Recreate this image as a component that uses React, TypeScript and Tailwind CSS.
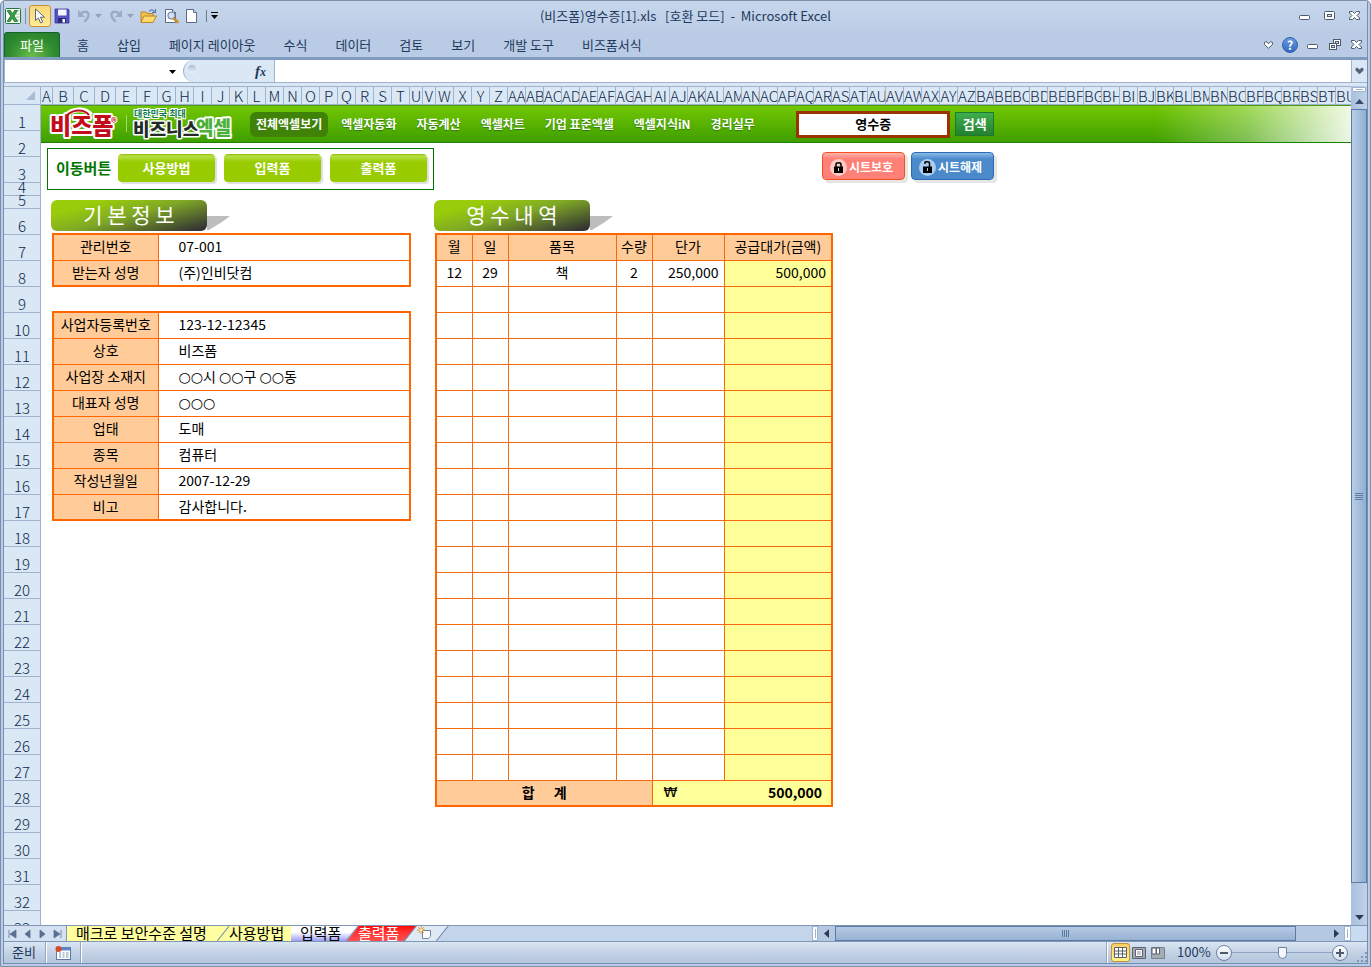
import type { ReactNode } from "react";
import clsx from "clsx";

const COLUMNS: string[] = Array.from({ length: 73 }, (_, i) =>
  i < 26
    ? String.fromCharCode(65 + i)
    : String.fromCharCode(64 + Math.floor(i / 26)) +
      String.fromCharCode(65 + (i % 26)),
);

const ROWS = Array.from({ length: 33 }, (_, i) => i + 1);

const RIBBON_TABS = [
  "홈",
  "삽입",
  "페이지 레이아웃",
  "수식",
  "데이터",
  "검토",
  "보기",
  "개발 도구",
  "비즈폼서식",
];

const BANNER_LINKS = [
  "엑셀자동화",
  "자동계산",
  "엑셀차트",
  "기업 표준엑셀",
  "엑셀지식iN",
  "경리실무",
];

const BASIC_INFO: [string, string][] = [
  ["관리번호", "07-001"],
  ["받는자 성명", "(주)인비닷컴"],
];

const COMPANY_INFO: [string, string][] = [
  ["사업자등록번호", "123-12-12345"],
  ["상호", "비즈폼"],
  ["사업장 소재지", "○○시 ○○구 ○○동"],
  ["대표자 성명", "○○○"],
  ["업태", "도매"],
  ["종목", "컴퓨터"],
  ["작성년월일", "2007-12-29"],
  ["비고", "감사합니다."],
];

const ITEM_ROWS: string[][] = [
  ["12", "29", "책", "2", "250,000", "500,000"],
  ...Array.from({ length: 19 }, () => ["", "", "", "", "", ""]),
];

function colWidth(i: number) {
  if (i === 0) return "w-3";
  if (i < 6) return "w-[21px]";
  if (i === 20 || i === 21) return "w-[13px]";
  return "w-[18px]";
}

/* ── Small drawings ─────────────────────────────────────────── */

function Caret({ className, large }: { className?: string; large?: boolean }) {
  return (
    <svg
      width={large ? 9 : 7}
      height={large ? 5 : 4}
      viewBox="0 0 7 4"
      className={clsx("shrink-0", className)}
      fill="currentColor"
    >
      <path d="M0 0h7L3.5 4z" />
    </svg>
  );
}

function ExcelIcon() {
  return (
    <svg width="16" height="16" viewBox="0 0 16 16">
      <rect x=".5" y=".5" width="15" height="15" rx="1" fill="#fff" stroke="#1f7a34" />
      <path d="M10.500 3h4M11 6h3.500M11 9h3.500M10.500 12h4" stroke="#8fc59a" />
      <path d="M2 2.500h3.500l2 3.300 2-3.300h3L9.200 8l3.500 5.500H9.300L7.300 10l-2.100 3.500H2L5.600 8z" fill="#35a043" stroke="#146b26" strokeWidth=".7" />
    </svg>
  );
}

function PointerIcon() {
  return (
    <svg width="12" height="16" viewBox="0 0 12 16">
      <path d="M1.500 1v11.500l2.900-2.600 2.100 5 2.100-.9-2.100-4.800h4z" fill="#fff" stroke="#55637c" />
    </svg>
  );
}

function SaveIcon() {
  return (
    <svg width="16" height="16" viewBox="0 0 16 16">
      <path d="M1 1h13l1 1v13H1z" fill="#5551c4" stroke="#39359a" strokeWidth=".8" />
      <path d="M4 1.500h8.500v6H4z" fill="#f4f6ff" />
      <path d="M4 10h8v5H4z" fill="#2b2875" />
      <path d="M8.500 11h2.500v3.500H8.500z" fill="#fff" />
    </svg>
  );
}

function UndoIcon({ flip }: { flip?: boolean }) {
  return (
    <svg width="16" height="16" viewBox="0 0 16 16" className={clsx(flip && "-scale-x-100")}>
      <path d="M4 6.500C7 2.500 13 3 12.500 7.500 12.200 10.500 9.500 12 8.500 14" fill="none" stroke="#9aabc4" strokeWidth="2.400" />
      <path d="M2 2v7h7z" fill="#9aabc4" />
    </svg>
  );
}

function FolderIcon() {
  return (
    <svg width="17" height="16" viewBox="0 0 17 16">
      <path d="M1 14V4h5l1.500 1.500H13V8" fill="#f3c04b" stroke="#b8862a" />
      <path d="M1 14.500 4 8h12.500L13 14.500z" fill="#ffd86e" stroke="#b8862a" />
      <path d="M9 3.500c2-2.500 4-2 5.500.5M15.500 1v3.500H12" fill="none" stroke="#587cae" strokeWidth="1.200" />
    </svg>
  );
}

function PageIcon({ lens }: { lens?: boolean }) {
  return (
    <svg width="16" height="16" viewBox="0 0 16 16">
      <path d="M2.500 1.500h7l3 3v10h-10z" fill="#fff" stroke="#5a6b86" />
      <path d="M9.500 1.500v3h3" fill="#dfe7f3" stroke="#5a6b86" />
      {lens && (
        <>
          <circle cx="8.500" cy="7.500" r="3.500" fill="#cfe2f5" stroke="#6e86a8" strokeWidth="1.200" />
          <path d="m11 10.500 3.500 3.500" stroke="#c98a2b" strokeWidth="2.600" strokeLinecap="round" />
        </>
      )}
    </svg>
  );
}

function MinimizeIcon() {
  return (
    <svg width="12" height="12" viewBox="0 0 12 12">
      <rect x=".5" y="5.500" width="10" height="4" rx="1" fill="#fff" stroke="#4c5a6e" />
    </svg>
  );
}

function MaximizeIcon() {
  return (
    <svg width="12" height="12" viewBox="0 0 12 12">
      <rect x=".5" y="1.500" width="10" height="8" rx="1" fill="#fff" stroke="#4c5a6e" />
      <rect x="3.500" y="4.500" width="4" height="2" fill="#dbe5f1" stroke="#4c5a6e" />
    </svg>
  );
}

function RestoreIcon() {
  return (
    <svg width="12" height="12" viewBox="0 0 12 12">
      <rect x="4.500" y=".5" width="7" height="6" fill="#fff" stroke="#4c5a6e" />
      <rect x="6.500" y="2.500" width="3" height="2" fill="#dbe5f1" stroke="#4c5a6e" />
      <rect x=".5" y="4.500" width="7" height="6" fill="#fff" stroke="#4c5a6e" />
      <rect x="2.500" y="6.500" width="3" height="2" fill="#dbe5f1" stroke="#4c5a6e" />
    </svg>
  );
}

function CloseIcon() {
  return (
    <svg width="12" height="12" viewBox="0 0 12 12">
      <path d="M.5 1.500h3l2 2 2-2h3v1.500L8 5.500l2.500 2.500v1.500h-3l-2-2-2 2h-3V8L3 5.500.5 3z" fill="#fff" stroke="#4c5a6e" />
    </svg>
  );
}

function ChevronIcon({ solid }: { solid?: boolean }) {
  return (
    <svg width="9" height="8" viewBox="0 0 9 8">
      <path
        d="M.5 1.500 2 .5l2.500 2L7 .5l1.500 1v2L4.500 7.300.5 3.500z"
        fill={solid ? "#56657b" : "#fff"}
        stroke="#4c5a6e"
        strokeWidth={solid ? 0 : 1}
      />
    </svg>
  );
}

function LockIcon({ open }: { open?: boolean }) {
  return (
    <svg width="17" height="17" viewBox="0 0 17 17">
      <circle cx="8.500" cy="8.500" r="8.500" fill={open ? "#a9cdee" : "#ffc9c4"} />
      <path d="M4 7.500h9v6.500H4z" />
      <path
        d={open ? "M6 5V3.500C6 2.300 10.500 2.300 10.500 4V8" : "M6 8V5.500C6 3.300 11 3.300 11 5.500V8"}
        fill="none"
        stroke="#000"
        strokeWidth="1.500"
      />
      <path d="M8.500 9v3" stroke={open ? "#a9cdee" : "#ffc9c4"} />
    </svg>
  );
}

function Logo() {
  return (
    <svg width="186" height="34" viewBox="0 0 186 34" className="shrink-0" fontFamily="Noto Sans CJK KR, sans-serif" fontWeight="900">
      <path d="M16 9C24 1 36 1 42 8" fill="none" stroke="#fff" strokeWidth="5" />
      <text x="1" y="27" fontSize="23" fill="#c40d1c" stroke="#fff" strokeWidth="4" strokeLinejoin="round" paintOrder="stroke">비즈폼</text>
      <path d="M18 8C25 2 35 2 40 8" fill="none" stroke="#c40d1c" strokeWidth="2" />
      <text x="62" y="20" fontSize="11" fontWeight="700" fill="#c40d1c" stroke="#fff" strokeWidth="2" paintOrder="stroke">®</text>
      <path d="M77.500 8v17" stroke="#9fdc62" />
      <text x="84" y="29" fontSize="18" fill="#222b26" stroke="#fff" strokeWidth="3" strokeLinejoin="round" paintOrder="stroke">비즈니스</text>
      <text x="147" y="28" fontSize="19" fill="#4cb03a" stroke="#fff" strokeWidth="4" strokeLinejoin="round" paintOrder="stroke">엑셀</text>
      <text x="85" y="10" fontSize="9" fontWeight="700" fill="#0c7a50" stroke="#fff" strokeWidth="2" paintOrder="stroke">대한민국 최대</text>
    </svg>
  );
}

/* ── Sheet pieces ───────────────────────────────────────────── */

function SectionBadge({ children }: { children: ReactNode }) {
  return (
    <div className="flex items-end">
      <h2 className="flex h-[31px] w-[156px] items-center justify-center rounded-md bg-[linear-gradient(165deg,#99cc0a_20%,#7fa826_50%,#333_95%)] pb-0.5 text-[21px] text-white">
        {children}
      </h2>
      <svg width="24" height="16" viewBox="0 0 24 16">
        <path d="M0 1h23L15 7 2 15H0z" fill="#bdbdbd" />
      </svg>
    </div>
  );
}

function MoveButton({ children }: { children: ReactNode }) {
  return (
    <button className="h-7 w-[97px] rounded-[4px] bg-[linear-gradient(#8cbd00,#b9e04a_2px,#a3d31a_6px,#99cc00_8px)] text-[13px] font-bold text-white shadow-[2px_2px_1px_#dedede]">
      {children}
    </button>
  );
}

// placeholder circles are narrower than a Hangul cell, so they get their own face
function CellValue({ text }: { text: string }) {
  return text.split(/(○+)/).map((part, i) =>
    part.startsWith("○") ? (
      <span key={i} className="font-['DejaVu_Sans',sans-serif] leading-3">
        {part}
      </span>
    ) : (
      part
    ),
  );
}

function InfoTable({ rows }: { rows: [string, string][] }) {
  return (
    <table className="ml-px w-[359px] table-fixed border-collapse border-2 border-[#ff6600] text-[14px] leading-5">
      <colgroup>
        <col className="w-[105px]" />
        <col />
      </colgroup>
      <tbody>
        {rows.map(([label, value]) => (
          <tr key={label} className="h-[26px]">
            <th scope="row" className="border border-[#ff6600] bg-[#ffcc99] p-0 pb-0.5 font-normal">
              {label}
            </th>
            <td className="border border-[#ff6600] py-0 pr-0 pb-0.5 pl-5">
              <CellValue text={value} />
            </td>
          </tr>
        ))}
      </tbody>
    </table>
  );
}

const CELL = "border border-[#f56a10] p-0 pb-0.5";

function ItemTable() {
  return (
    <table className="ml-px w-[398px] table-fixed border-collapse border-2 border-[#ff6600] text-center text-[14px] leading-5">
      <colgroup>
        <col className="w-9" />
        <col className="w-9" />
        <col className="w-[108px]" />
        <col className="w-9" />
        <col className="w-[72px]" />
        <col />
      </colgroup>
      <thead>
        <tr className="h-[26px] bg-[#ffcc99]">
          {["월", "일", "품목", "수량", "단가", "공급대가(금액)"].map((h) => (
            <th key={h} scope="col" className={clsx(CELL, "font-normal whitespace-nowrap")}>
              {h}
            </th>
          ))}
        </tr>
      </thead>
      <tbody>
        {ITEM_ROWS.map((row, r) => (
          <tr key={r} className="h-[26px]">
            {row.map((value, c) => (
              <td
                key={c}
                className={clsx(
                  CELL,
                  c > 3 && "pr-[5px] text-right",
                  c === 5 && "bg-[#ffff99]",
                )}
              >
                {value}
              </td>
            ))}
          </tr>
        ))}
      </tbody>
      <tfoot>
        <tr className="h-[26px] font-bold">
          <th scope="row" colSpan={4} className={clsx(CELL, "bg-[#ffcc99] whitespace-pre")}>
            {"합      계"}
          </th>
          <td colSpan={2} className={clsx(CELL, "bg-[#ffff99]")}>
            <div className="flex justify-between pr-[9px] pl-[11px]">
              <span className="font-['DejaVu_Sans',sans-serif] font-normal">₩</span>
              <span>500,000</span>
            </div>
          </td>
        </tr>
      </tfoot>
    </table>
  );
}

function SheetTab({
  children,
  className,
  slantLeft,
  slantRight,
}: {
  children: ReactNode;
  className: string;
  slantLeft?: boolean;
  slantRight?: boolean;
}) {
  return (
    <button
      className={clsx(
        "relative flex h-[15px] shrink-0 items-center overflow-hidden pb-0.5 text-[15px] leading-[15px] whitespace-nowrap",
        slantLeft && slantRight && "[clip-path:polygon(12px_0,100%_0,calc(100%-12px)_100%,0_100%)]",
        slantLeft && !slantRight && "[clip-path:polygon(12px_0,100%_0,100%_100%,0_100%)]",
        !slantLeft && slantRight && "[clip-path:polygon(0_0,100%_0,calc(100%-12px)_100%,0_100%)]",
        className,
      )}
    >
      {children}
      {slantRight && (
        <svg width="13" height="15" viewBox="0 0 13 15" className="absolute top-0 right-0">
          <path d="M12.500 0 .5 15" stroke="#6f8bb0" strokeWidth="1.500" />
        </svg>
      )}
    </button>
  );
}

/* ── Window ─────────────────────────────────────────────────── */

function TitleBar() {
  return (
    <div className="relative flex h-[31px] shrink-0 items-center bg-linear-to-b from-[#c6d6ec] to-[#bccde6] pb-0.5 pl-[1px] text-[#1e395b]">
      <ExcelIcon />
      <span className="ml-1 h-4 w-px bg-[#7f8fa6]" />
      <button aria-label="선택" className="ml-[3px] flex size-[22px] items-center justify-center rounded-[3px] border border-[#c2933b] bg-linear-to-b from-[#fbd77c] to-[#ffec91]">
        <PointerIcon />
      </button>
      <button aria-label="저장" className="ml-[3px]"><SaveIcon /></button>
      <button aria-label="실행 취소" className="ml-[6px]"><UndoIcon /></button>
      <Caret className="ml-[3px] text-[#8fa1bb]" />
      <button aria-label="다시 실행" className="ml-[6px]"><UndoIcon flip /></button>
      <Caret className="ml-[3px] text-[#8fa1bb]" />
      <button aria-label="열기" className="ml-[6px]"><FolderIcon /></button>
      <button aria-label="인쇄 미리 보기" className="ml-[6px]"><PageIcon lens /></button>
      <button aria-label="새로 만들기" className="ml-[5px]"><PageIcon /></button>
      <span className="ml-[6px] h-3 w-px bg-[#6b7c95]" />
      <button aria-label="도구 모음 사용자 지정" className="ml-1 flex flex-col items-center gap-0.5 text-black">
        <span className="h-px w-[7px] bg-black" />
        <Caret />
      </button>
      <div className="pointer-events-none absolute inset-0 flex items-center justify-center pb-0.5 text-[13px] whitespace-pre">
        {"(비즈폼)영수증[1].xls   [호환 모드]  -  Microsoft Excel"}
      </div>
      <div className="ml-auto flex gap-[13px] pr-[6px]">
        <button aria-label="최소화"><MinimizeIcon /></button>
        <button aria-label="최대화"><MaximizeIcon /></button>
        <button aria-label="닫기"><CloseIcon /></button>
      </div>
    </div>
  );
}

function Ribbon() {
  return (
    <div className="flex h-7 shrink-0 items-center border-b-[3px] border-[#7f9cc0] bg-[#bacce5] text-[13px] text-[#1e395b]">
      <button className="h-[25px] w-14 rounded-t-[3px] border border-b-0 border-[#13652a] bg-[radial-gradient(ellipse_at_bottom,#6cc04a,#2f8c2f_60%,#237a2c)] text-white">
        파일
      </button>
      <nav className="ml-[17px] flex gap-7">
        {RIBBON_TABS.map((t) => (
          <button key={t} className="whitespace-nowrap">{t}</button>
        ))}
      </nav>
      <div className="ml-auto flex items-center pr-1">
        <button aria-label="리본 최소화"><ChevronIcon /></button>
        <button aria-label="도움말" className="ml-[9px] flex size-4 items-center justify-center rounded-full border border-[#2c5fae] bg-linear-to-b from-[#6d9be0] to-[#3469bd] text-[12px] leading-3 font-bold text-white">
          ?
        </button>
        <button aria-label="통합 문서 최소화" className="ml-[9px]"><MinimizeIcon /></button>
        <button aria-label="통합 문서 복원" className="ml-[10px]"><RestoreIcon /></button>
        <button aria-label="통합 문서 닫기" className="ml-[10px]"><CloseIcon /></button>
      </div>
    </div>
  );
}

function FormulaBar() {
  return (
    <>
      <div className="flex h-[23px] shrink-0 border-b border-[#9fb3cd] bg-white">
        <input aria-label="이름 상자" className="w-[165px] border-l border-[#9fb3cd] px-1 text-[13px] outline-none" />
        <button aria-label="이름 목록" className="flex w-[14px] items-center pt-0.5 text-black">
          <Caret />
        </button>
        <div className="flex w-[92px] items-center justify-between rounded-l-full border-r border-l border-[#9fb3cd] bg-[#dae7f5] pr-2 pl-1">
          <span className="mb-1 size-2 rounded-full bg-linear-to-b from-[#a9bbd3] to-[#eef4fb]" />
          <span className="font-['Liberation_Serif',serif] text-[15px] font-bold text-[#1e395b] italic">
            f<span className="text-[12px]">x</span>
          </span>
        </div>
        <input aria-label="수식 입력줄" className="min-w-0 flex-1 px-1 text-[13px] outline-none" />
        <button aria-label="수식 입력줄 확장" className="flex w-4 items-center justify-center border-l border-[#9fb3cd] bg-[#dae7f5]">
          <ChevronIcon solid />
        </button>
      </div>
      <div className="h-[3px] shrink-0 bg-[#dbe7f5]" />
    </>
  );
}

function Banner() {
  return (
    <header className="flex h-[38px] items-center border-t border-b border-t-[#4c9a12] border-b-[#1f8000] bg-[linear-gradient(to_right,transparent_85%,#ffffff55_92%,#ffffffe6_100%),linear-gradient(#72c602,#3f9f00)] pl-2 text-[12px] font-bold whitespace-nowrap text-white">
      <Logo />
      <a href="#all" className="ml-[15px] flex h-[25px] items-center rounded-md bg-[#3f8207] px-[6px]">
        전체엑셀보기
      </a>
      <nav className="ml-[13px] flex w-[427px] gap-5">
        {BANNER_LINKS.map((l) => (
          <a key={l} href="#menu" className="[text-shadow:0_1px_1px_#2c7a00]">{l}</a>
        ))}
      </nav>
      <input
        aria-label="검색어"
        defaultValue="영수증"
        className="ml-[28px] h-[27px] w-[154px] border-3 border-[#993300] bg-white pb-0.5 text-center text-[13px] text-black outline-none"
      />
      <button className="ml-[5px] h-6 w-[39px] border border-[#1d7a2c] bg-linear-to-b from-[#3fae4e] to-[#23812f] text-[13px]">
        검색
      </button>
    </header>
  );
}

function Sheet() {
  return (
    <main className="min-w-0 flex-1 overflow-hidden bg-white text-black">
      <Banner />
      <div className="mt-[5px] flex items-start pl-[6px]">
        <div className="flex h-[42px] w-[387px] shrink-0 border border-[#007500] pt-[5px] pl-2">
          <span className="w-[62px] pt-[3px] text-[15px] font-bold text-[#007500]">이동버튼</span>
          <div className="flex gap-[9px]">
            <MoveButton>사용방법</MoveButton>
            <MoveButton>입력폼</MoveButton>
            <MoveButton>출력폼</MoveButton>
          </div>
        </div>
        <div className="mt-1 ml-[388px] flex shrink-0 gap-[6px] text-[12px] font-bold text-white">
          <button className="flex h-7 w-[83px] items-center gap-[2px] rounded-[4px] border border-[#f4511e] bg-[linear-gradient(#ffb3ab,#ff8076_6px)] pt-0.5 pl-[7px] shadow-[3px_3px_0_#e6e6e6]">
            <LockIcon />
            시트보호
          </button>
          <button className="flex h-7 w-[83px] items-center gap-[2px] rounded-[4px] border border-[#2a6cb5] bg-[linear-gradient(#8dbbe6,#4a8acb_6px)] pt-0.5 pl-[7px] shadow-[3px_3px_0_#e6e6e6]">
            <LockIcon open />
            시트해제
          </button>
        </div>
      </div>

      <div className="mt-[10px] flex pl-[10px]">
        <section className="w-[383px] shrink-0">
          <SectionBadge>기 본 정 보</SectionBadge>
          <div className="mt-0.5 flex flex-col gap-6">
            <InfoTable rows={BASIC_INFO} />
            <InfoTable rows={COMPANY_INFO} />
          </div>
        </section>
        <section className="shrink-0">
          <SectionBadge>영 수 내 역</SectionBadge>
          <div className="mt-0.5">
            <ItemTable />
          </div>
        </section>
      </div>
    </main>
  );
}

function VerticalScroll() {
  return (
    <div className="flex w-4 shrink-0 flex-col bg-linear-to-r from-[#a9bfdc] to-[#c0d2ea]">
      <div className="m-px flex h-[5px] items-center justify-center rounded-[1px] border border-[#9fb3cd] bg-white">
        <span className="h-px w-[7px] bg-[#9fb3cd]" />
      </div>
      <button aria-label="위로" className="flex h-4 shrink-0 items-center justify-center text-[#3a4a6b]">
        <Caret large className="rotate-180" />
      </button>
      <div className="flex min-h-0 flex-1 flex-col items-center justify-center gap-px border border-[#5b7ba5] bg-linear-to-r from-[#b9cfe8] to-[#92aecf]">
        {[0, 1, 2, 3].map((i) => (
          <span key={i} className="h-px w-2 bg-[#5b7ba5]" />
        ))}
      </div>
      <div className="h-[26px] shrink-0" />
      <button aria-label="아래로" className="flex h-4 shrink-0 items-center justify-center text-[#2b3858]">
        <Caret large />
      </button>
    </div>
  );
}

function SheetTabs() {
  const arrows = ["M2 1v8M9 1v8L3 5z", "M8 1v8L3 5z", "M3 1v8l5-4z", "M9 1v8M2 1v8l6-4z"];
  return (
    <div className="flex h-[17px] shrink-0 border-y border-[#8097b5] bg-[#c3d5eb]">
      <div className="flex w-[63px] items-center justify-between border-r border-[#8097b5] bg-[#d3e1f2] px-[3px]">
        {arrows.map((d) => (
          <button key={d} aria-label="시트 이동">
            <svg width="11" height="10" viewBox="0 0 11 10">
              <path d={d} fill="#5a6f90" stroke="#5a6f90" strokeWidth=".8" />
            </svg>
          </button>
        ))}
      </div>
      <SheetTab slantRight className="w-[163px] bg-[#ffffa0] pl-[9px] text-black">
        매크로 보안수준 설명
      </SheetTab>
      <SheetTab slantLeft className="-ml-3 w-[73px] bg-[#ffffa0] pl-[11px] text-black">
        사용방법
      </SheetTab>
      <SheetTab slantRight className="w-[68px] bg-[linear-gradient(#fff_40%,#9d9df5)] pl-[9px] text-black">
        입력폼
      </SheetTab>
      <SheetTab slantLeft slantRight className="-ml-3 w-[70px] bg-linear-to-b from-[#ff0000] to-[#ff5050] pl-[11px] text-white">
        출력폼
      </SheetTab>
      <SheetTab slantLeft slantRight className="-ml-3 w-11 bg-[#dfe9f5] pl-3">
        <svg width="16" height="14" viewBox="0 0 16 14">
          <path d="M5.500 4.500h8v6l-2 2h-6z" fill="#fff" stroke="#6f86a6" />
          <path d="M4 0v8M0 4h8M1.300 1.300l5.400 5.400M6.700 1.300 1.300 6.700" stroke="#d9952c" />
          <circle cx="4" cy="4" r="1.500" fill="#ffe9a0" />
        </svg>
      </SheetTab>
      <div className="min-w-0 flex-1" />
      {/* horizontal scroll bar */}
      <div className="flex w-[539px] shrink-0 bg-[#b4c8e2]">
        <span className="flex w-[6px] justify-center border border-[#9fb3cd] bg-white py-0.5">
          <span className="w-px bg-[#9fb3cd]" />
        </span>
        <button aria-label="왼쪽으로" className="flex w-[17px] items-center justify-center text-[#2b3858]">
          <Caret large className="rotate-90" />
        </button>
        <div className="flex flex-1 items-center justify-center gap-px border border-[#5b7ba5] bg-linear-to-b from-[#b5cae5] to-[#98b2d2]">
          {[0, 1, 2, 3].map((i) => (
            <span key={i} className="h-[7px] w-px bg-[#5b7ba5]" />
          ))}
        </div>
        <div className="w-8" />
        <button aria-label="오른쪽으로" className="flex w-4 items-center justify-center text-[#2b3858]">
          <Caret large className="-rotate-90" />
        </button>
        <span className="flex w-[7px] justify-center border border-[#9fb3cd] bg-white py-0.5">
          <span className="w-px bg-[#9fb3cd]" />
        </span>
      </div>
      <div className="w-4 shrink-0 bg-[#c9dbf0]" />
    </div>
  );
}

function ZoomButton({ label, path }: { label: string; path: string }) {
  return (
    <button aria-label={label} className="flex size-4 shrink-0 items-center justify-center rounded-full border border-[#6f83a0] bg-linear-to-b from-white to-[#d3dfed]">
      <svg width="10" height="10" viewBox="0 0 10 10">
        <path d={path} stroke="#4c5a6e" strokeWidth="2" />
      </svg>
    </button>
  );
}

function StatusBar() {
  return (
    <footer className="flex h-[21px] shrink-0 items-center bg-linear-to-b from-[#dbe6f3] via-[#c3d2e5] to-[#b3c5dc] text-[13px] text-[#1e395b]">
      <span className="w-[41px] pb-0.5 pl-2">준비</span>
      <span className="h-full w-0.5 border-r border-l border-r-white border-l-[#8fa5c2]" />
      <button aria-label="매크로 기록" className="ml-2">
        <svg width="16" height="14" viewBox="0 0 16 14">
          <rect x="1.500" y="1.500" width="14" height="12" fill="#fff" stroke="#5d78a3" />
          <path d="M1.500 1.500h14v3h-14z" fill="#5f86c4" />
          <path d="M4 7h2m1.500 0h2M11 7h2.500M4 9h2m1.500 0h2M11 9h2.500M4 11h2m1.500 0h2M11 11h2.500" stroke="#7d93b5" />
          <circle cx="3.500" cy="3" r="3" fill="#d9482b" />
        </svg>
      </button>
      <span className="ml-[9px] h-full w-0.5 border-r border-l border-r-white border-l-[#8fa5c2]" />
      <div className="ml-auto flex h-full items-center">
        <span className="h-full w-0.5 border-r border-l border-r-white border-l-[#8fa5c2]" />
        <button aria-label="기본" className="ml-[3px] flex h-[19px] w-[19px] items-center justify-center rounded-[3px] border border-[#c2933b] bg-linear-to-b from-[#fbcf63] to-[#fff08a]">
          <svg width="13" height="11" viewBox="0 0 13 11">
            <path d="M.5.5h12v10H.5zM.5 4h12M.5 7h12M4.500.5v10M8.500.5v10" fill="#fff" stroke="#5a6270" />
          </svg>
        </button>
        <button aria-label="페이지 레이아웃 보기" className="ml-0.5">
          <svg width="14" height="12" viewBox="0 0 14 12">
            <path d="M.5.5h13v11H.5z" fill="#a5abb3" stroke="#5a6270" />
            <path d="M3.500 2.500h7v7h-7z" fill="#fff" stroke="#5a6270" />
            <path d="M5 5h4M5 7h4" stroke="#8a929e" />
          </svg>
        </button>
        <button aria-label="페이지 나누기 미리 보기" className="ml-[5px]">
          <svg width="14" height="12" viewBox="0 0 14 12">
            <path d="M.5.5h13v11H.5z" fill="#a5abb3" stroke="#7a828e" />
            <path d="M1 1h4v6H1zM5.500 1h3v6h-3z" fill="#fff" stroke="#5a6270" />
          </svg>
        </button>
        <button className="ml-3 w-[39px] pb-0.5 text-left">100%</button>
        <ZoomButton label="축소" path="M1 5h8" />
        <input
          type="range"
          aria-label="확대/축소"
          defaultValue={50}
          className="h-3 w-[100px] appearance-none bg-[linear-gradient(#8ba2c0,#8ba2c0)] bg-[length:100%_1px] bg-center bg-no-repeat [&::-webkit-slider-thumb]:h-3 [&::-webkit-slider-thumb]:w-[9px] [&::-webkit-slider-thumb]:appearance-none [&::-webkit-slider-thumb]:rounded-b-[5px] [&::-webkit-slider-thumb]:border [&::-webkit-slider-thumb]:border-[#6f83a0] [&::-webkit-slider-thumb]:bg-[#f3f7fc]"
        />
        <ZoomButton label="확대" path="M1 5h8M5 1v8" />
        <svg width="19" height="12" viewBox="0 0 19 12" className="self-end" fill="#7f96b6">
          <path d="M9 9h2v2H9zM13 9h2v2h-2zM17 9h2v2h-2zM13 5h2v2h-2zM17 5h2v2h-2zM17 1h2v2h-2z" />
        </svg>
      </div>
    </footer>
  );
}

export default function App() {
  return (
    <div className="h-screen overflow-hidden rounded-t-[5px] border border-[#7e8ea5] bg-[#b9cce6] px-0.5 pb-0.5 font-['Noto_Sans_CJK_KR',sans-serif]">
      <div className="flex h-full flex-col border-x border-b border-[#7290b4]">
        <TitleBar />
        <Ribbon />
        <FormulaBar />
        <div className="flex min-h-0 flex-1">
          <div className="flex min-w-0 flex-1 flex-col">
            <div className="flex h-[19px] shrink-0 border-y border-[#9fb3cd] bg-[#dae7f5] text-[15px] leading-[17px] font-light text-[#0f2747]">
              <button aria-label="모두 선택" className="flex w-[37px] shrink-0 items-end justify-end border-r border-[#9fb3cd] pr-[5px] pb-1">
                <svg width="9" height="9" viewBox="0 0 9 9">
                  <path d="M9 0v9H0z" fill="#a9bcd6" />
                </svg>
              </button>
              <div className="flex min-w-0 flex-1 overflow-hidden">
                {COLUMNS.map((c, i) => (
                  <div
                    key={c}
                    className={clsx(
                      "flex shrink-0 justify-center-safe overflow-hidden border-r border-[#9fb3cd]",
                      colWidth(i),
                    )}
                  >
                    {c}
                  </div>
                ))}
              </div>
            </div>
            <div className="flex min-h-0 flex-1">
              <div className="w-[37px] shrink-0 overflow-hidden border-r border-[#9fb3cd] bg-[#dae7f5] text-[15px] leading-[17px] font-light text-[#0f2747]">
                {ROWS.map((r) => (
                  <div
                    key={r}
                    className={clsx(
                      "flex items-end justify-center border-b border-[#9fb3cd]",
                      r === 4 || r === 5 ? "h-[13px]" : "h-[26px]",
                    )}
                  >
                    {r}
                  </div>
                ))}
              </div>
              <Sheet />
            </div>
          </div>
          <VerticalScroll />
        </div>
        <SheetTabs />
        <StatusBar />
      </div>
    </div>
  );
}
